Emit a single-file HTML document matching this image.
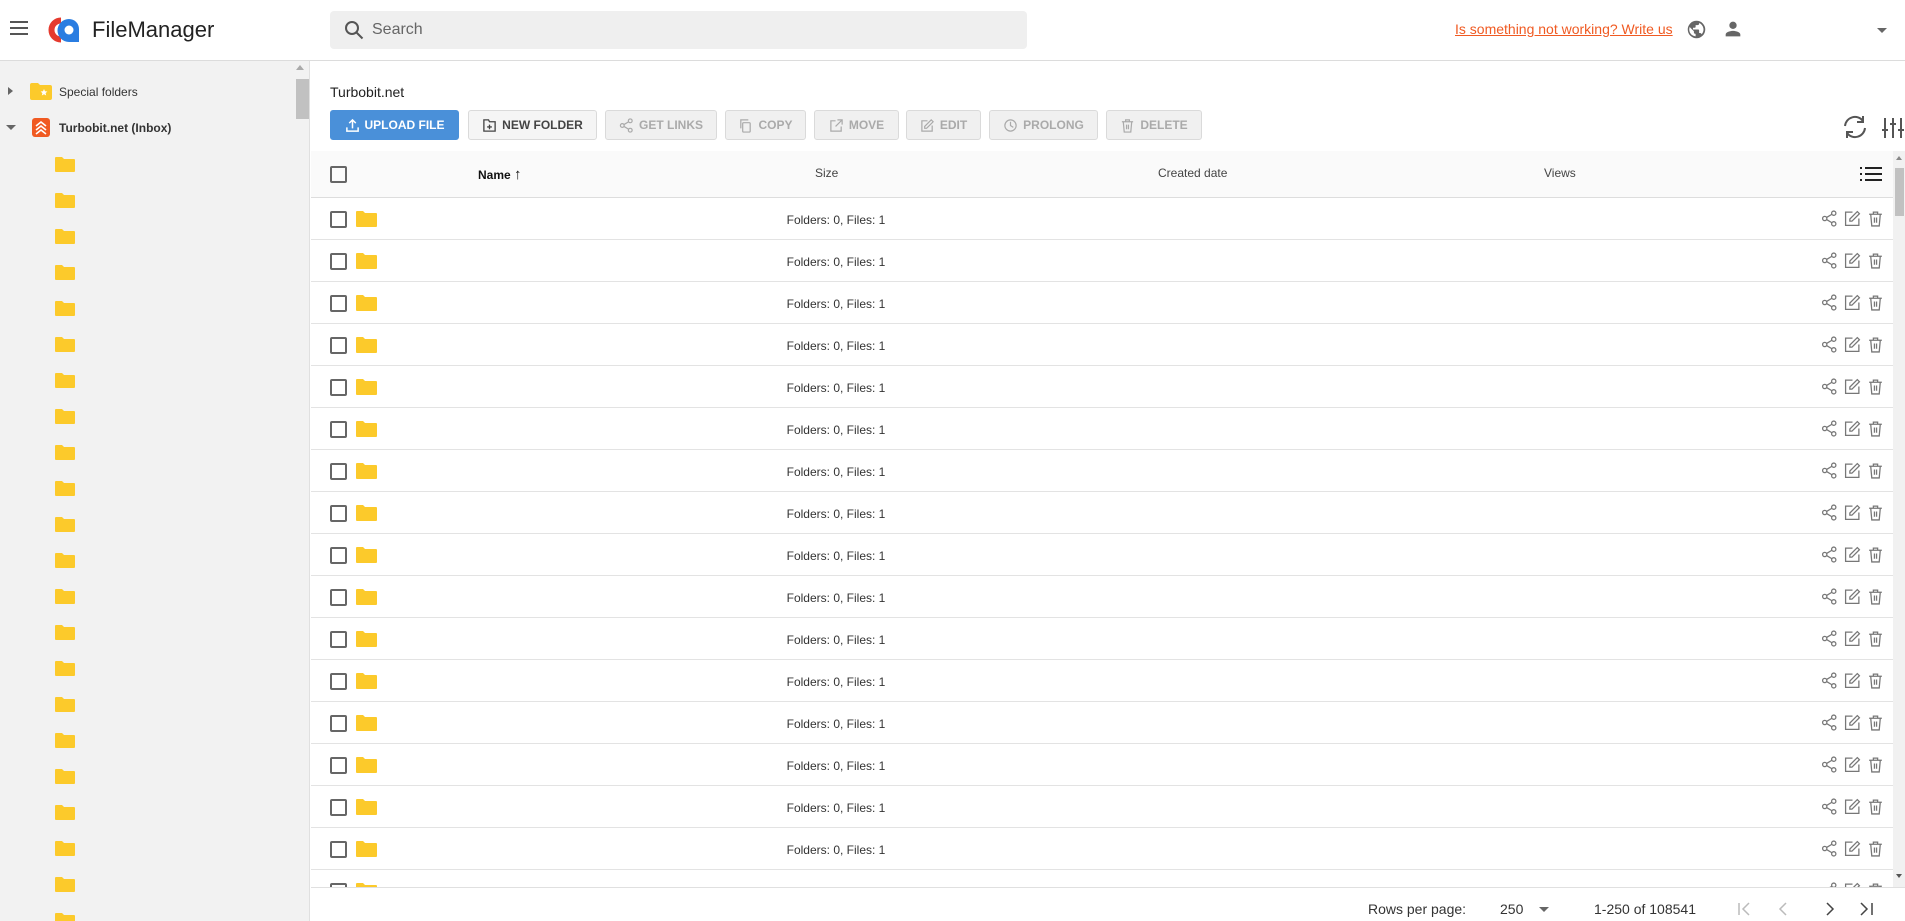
<!DOCTYPE html>
<html><head><meta charset="utf-8"><style>
*{box-sizing:border-box;margin:0;padding:0}
body{width:1905px;height:921px;overflow:hidden;font-family:"Liberation Sans",Arial,sans-serif;background:#fff;position:relative;color:#222}
.abs{position:absolute}
#hdr{left:0;top:0;width:1905px;height:61px;border-bottom:1px solid #dcdcdc;background:#fff}
#side{left:0;top:61px;width:310px;height:860px;background:#f2f2f2;border-right:1px solid #e0e0e0;overflow:hidden}
.fold{position:absolute;left:55px;width:20px;height:15px}
.btn{position:absolute;top:110px;height:30px;border:1px solid #dadada;border-radius:3px;background:#f0f0f0;color:#aaa;font-size:12px;font-weight:600;display:flex;align-items:center;justify-content:center;gap:5px}
.btn svg{width:15px;height:15px}
.row{position:absolute;left:311px;width:1582px;height:42px;border-bottom:1px solid #e3e3e3}
.cb{position:absolute;left:19px;top:13px;width:17px;height:17px;border:2px solid #666;border-radius:2px}
.rf{position:absolute;left:45px;top:13px;width:21px;height:16px}
.rt{position:absolute;left:475px;top:15px;font-size:12px;color:#333;width:100px;text-align:center}
.ic{position:absolute;top:12px;width:17px;height:17px}
.th{position:absolute;top:166px;font-size:12px;color:#444}
</style></head><body>
<div id="hdr" class="abs">
 <div class="abs" style="left:10px;top:21px;width:18px;height:2px;background:#555;box-shadow:0 6px 0 #555,0 12px 0 #555"></div>
 <svg class="abs" style="left:47px;top:16px" width="36" height="28" viewBox="0 0 36 28"><path d="M14 4.5a9.5 9.5 0 1 0 0 19" fill="none" stroke="#e53a2e" stroke-width="6"/><path d="M22 3a10 10 0 0 1 10 10v13H22a10 10 0 0 1 0-23z" fill="#2a7de1"/><circle cx="22" cy="14" r="4.5" fill="#fff"/></svg>
 <div class="abs" style="left:92px;top:17px;font-size:22px;color:#222">FileManager</div>
 <div class="abs" style="left:330px;top:11px;width:697px;height:38px;background:#efefef;border-radius:4px">
  <svg class="abs" style="left:14px;top:9px" width="20" height="20" viewBox="0 0 20 20"><circle cx="8" cy="8" r="6" fill="none" stroke="#555" stroke-width="2"/><path d="M12.5 12.5l6 6" stroke="#555" stroke-width="2"/></svg>
  <div class="abs" style="left:42px;top:10px;font-size:16px;color:#666">Search</div>
 </div>
 <div class="abs" style="left:1455px;top:21px;font-size:14px;color:#f05a22;text-decoration:underline">Is something not working? Write us</div>
 <svg class="abs" style="left:1686px;top:19px" width="21" height="21" viewBox="0 0 24 24"><path fill="#666" d="M12 2a10 10 0 1 0 0 20 10 10 0 0 0 0-20zm-1 17.9A8 8 0 0 1 4.2 9.2L9 14v1a2 2 0 0 0 2 2zm6.9-2.5A2 2 0 0 0 16 16h-1v-3a1 1 0 0 0-1-1H8v-2h2a1 1 0 0 0 1-1V7h2a2 2 0 0 0 2-2v-.4a8 8 0 0 1 2.9 12.8z"/></svg>
 <svg class="abs" style="left:1722px;top:18px" width="22" height="22" viewBox="0 0 24 24"><path fill="#666" d="M12 12a4 4 0 1 0 0-8 4 4 0 0 0 0 8zm0 2c-2.7 0-8 1.3-8 4v2h16v-2c0-2.7-5.3-4-8-4z"/></svg>
 <div class="abs" style="left:1877px;top:28px;border:5px solid transparent;border-top:5px solid #666"></div>
</div>
<div id="side" class="abs">
 <div class="abs" style="left:296px;top:4px;border:4px solid transparent;border-bottom:5px solid #aaa;border-top:0"></div>
 <div class="abs" style="left:296px;top:18px;width:13px;height:40px;background:#c1c1c1"></div>
 <div class="abs" style="left:8px;top:26px;border:4px solid transparent;border-left:5px solid #666"></div>
 <svg class="abs" style="left:30px;top:22px" width="22" height="17" viewBox="0 0 22 17"><path d="M0 2a2 2 0 0 1 2-2h6l2 2h10a2 2 0 0 1 2 2v11a2 2 0 0 1-2 2H2a2 2 0 0 1-2-2z" fill="#fcca2b"/><path d="M14 6l1 2.3 2.4.2-1.8 1.6.6 2.4-2.2-1.3-2.2 1.3.6-2.4-1.8-1.6 2.4-.2z" fill="#fff"/></svg>
 <div class="abs" style="left:59px;top:24px;font-size:12px;color:#333">Special folders</div>
 <div class="abs" style="left:6px;top:64px;border:5px solid transparent;border-top:5px solid #666"></div>
 <svg class="abs" style="left:32px;top:57px" width="18" height="19" viewBox="0 0 18 19"><rect width="18" height="19" rx="3" fill="#f05a22"/><path d="M4 8l5-4 5 4M4 12l5-4 5 4M4 16l5-4 5 4" fill="none" stroke="#fff" stroke-width="1.6"/></svg>
 <div class="abs" style="left:59px;top:60px;font-size:12px;font-weight:bold;color:#333">Turbobit.net (Inbox)</div>
 <svg class="fold" style="top:96px" viewBox="0 0 20 15"><path d="M0 1a1 1 0 0 1 1-1h6l2 2h10a1 1 0 0 1 1 1v11a1 1 0 0 1-1 1H1a1 1 0 0 1-1-1z" fill="#fcca2b"/></svg>
 <svg class="fold" style="top:132px" viewBox="0 0 20 15"><path d="M0 1a1 1 0 0 1 1-1h6l2 2h10a1 1 0 0 1 1 1v11a1 1 0 0 1-1 1H1a1 1 0 0 1-1-1z" fill="#fcca2b"/></svg>
 <svg class="fold" style="top:168px" viewBox="0 0 20 15"><path d="M0 1a1 1 0 0 1 1-1h6l2 2h10a1 1 0 0 1 1 1v11a1 1 0 0 1-1 1H1a1 1 0 0 1-1-1z" fill="#fcca2b"/></svg>
 <svg class="fold" style="top:204px" viewBox="0 0 20 15"><path d="M0 1a1 1 0 0 1 1-1h6l2 2h10a1 1 0 0 1 1 1v11a1 1 0 0 1-1 1H1a1 1 0 0 1-1-1z" fill="#fcca2b"/></svg>
 <svg class="fold" style="top:240px" viewBox="0 0 20 15"><path d="M0 1a1 1 0 0 1 1-1h6l2 2h10a1 1 0 0 1 1 1v11a1 1 0 0 1-1 1H1a1 1 0 0 1-1-1z" fill="#fcca2b"/></svg>
 <svg class="fold" style="top:276px" viewBox="0 0 20 15"><path d="M0 1a1 1 0 0 1 1-1h6l2 2h10a1 1 0 0 1 1 1v11a1 1 0 0 1-1 1H1a1 1 0 0 1-1-1z" fill="#fcca2b"/></svg>
 <svg class="fold" style="top:312px" viewBox="0 0 20 15"><path d="M0 1a1 1 0 0 1 1-1h6l2 2h10a1 1 0 0 1 1 1v11a1 1 0 0 1-1 1H1a1 1 0 0 1-1-1z" fill="#fcca2b"/></svg>
 <svg class="fold" style="top:348px" viewBox="0 0 20 15"><path d="M0 1a1 1 0 0 1 1-1h6l2 2h10a1 1 0 0 1 1 1v11a1 1 0 0 1-1 1H1a1 1 0 0 1-1-1z" fill="#fcca2b"/></svg>
 <svg class="fold" style="top:384px" viewBox="0 0 20 15"><path d="M0 1a1 1 0 0 1 1-1h6l2 2h10a1 1 0 0 1 1 1v11a1 1 0 0 1-1 1H1a1 1 0 0 1-1-1z" fill="#fcca2b"/></svg>
 <svg class="fold" style="top:420px" viewBox="0 0 20 15"><path d="M0 1a1 1 0 0 1 1-1h6l2 2h10a1 1 0 0 1 1 1v11a1 1 0 0 1-1 1H1a1 1 0 0 1-1-1z" fill="#fcca2b"/></svg>
 <svg class="fold" style="top:456px" viewBox="0 0 20 15"><path d="M0 1a1 1 0 0 1 1-1h6l2 2h10a1 1 0 0 1 1 1v11a1 1 0 0 1-1 1H1a1 1 0 0 1-1-1z" fill="#fcca2b"/></svg>
 <svg class="fold" style="top:492px" viewBox="0 0 20 15"><path d="M0 1a1 1 0 0 1 1-1h6l2 2h10a1 1 0 0 1 1 1v11a1 1 0 0 1-1 1H1a1 1 0 0 1-1-1z" fill="#fcca2b"/></svg>
 <svg class="fold" style="top:528px" viewBox="0 0 20 15"><path d="M0 1a1 1 0 0 1 1-1h6l2 2h10a1 1 0 0 1 1 1v11a1 1 0 0 1-1 1H1a1 1 0 0 1-1-1z" fill="#fcca2b"/></svg>
 <svg class="fold" style="top:564px" viewBox="0 0 20 15"><path d="M0 1a1 1 0 0 1 1-1h6l2 2h10a1 1 0 0 1 1 1v11a1 1 0 0 1-1 1H1a1 1 0 0 1-1-1z" fill="#fcca2b"/></svg>
 <svg class="fold" style="top:600px" viewBox="0 0 20 15"><path d="M0 1a1 1 0 0 1 1-1h6l2 2h10a1 1 0 0 1 1 1v11a1 1 0 0 1-1 1H1a1 1 0 0 1-1-1z" fill="#fcca2b"/></svg>
 <svg class="fold" style="top:636px" viewBox="0 0 20 15"><path d="M0 1a1 1 0 0 1 1-1h6l2 2h10a1 1 0 0 1 1 1v11a1 1 0 0 1-1 1H1a1 1 0 0 1-1-1z" fill="#fcca2b"/></svg>
 <svg class="fold" style="top:672px" viewBox="0 0 20 15"><path d="M0 1a1 1 0 0 1 1-1h6l2 2h10a1 1 0 0 1 1 1v11a1 1 0 0 1-1 1H1a1 1 0 0 1-1-1z" fill="#fcca2b"/></svg>
 <svg class="fold" style="top:708px" viewBox="0 0 20 15"><path d="M0 1a1 1 0 0 1 1-1h6l2 2h10a1 1 0 0 1 1 1v11a1 1 0 0 1-1 1H1a1 1 0 0 1-1-1z" fill="#fcca2b"/></svg>
 <svg class="fold" style="top:744px" viewBox="0 0 20 15"><path d="M0 1a1 1 0 0 1 1-1h6l2 2h10a1 1 0 0 1 1 1v11a1 1 0 0 1-1 1H1a1 1 0 0 1-1-1z" fill="#fcca2b"/></svg>
 <svg class="fold" style="top:780px" viewBox="0 0 20 15"><path d="M0 1a1 1 0 0 1 1-1h6l2 2h10a1 1 0 0 1 1 1v11a1 1 0 0 1-1 1H1a1 1 0 0 1-1-1z" fill="#fcca2b"/></svg>
 <svg class="fold" style="top:816px" viewBox="0 0 20 15"><path d="M0 1a1 1 0 0 1 1-1h6l2 2h10a1 1 0 0 1 1 1v11a1 1 0 0 1-1 1H1a1 1 0 0 1-1-1z" fill="#fcca2b"/></svg>
 <svg class="fold" style="top:852px" viewBox="0 0 20 15"><path d="M0 1a1 1 0 0 1 1-1h6l2 2h10a1 1 0 0 1 1 1v11a1 1 0 0 1-1 1H1a1 1 0 0 1-1-1z" fill="#fcca2b"/></svg>
</div>

<div class="abs" style="left:330px;top:84px;font-size:14px;color:#222">Turbobit.net</div>
<div class="btn" style="left:330px;width:129px;background:#4a90d9;border-color:#4a90d9;color:#fff"><svg viewBox="0 0 16 16"><path d="M8 11V2M4.5 5.5L8 2l3.5 3.5M2 10v4h12v-4" fill="none" stroke="#fff" stroke-width="1.6"/></svg>UPLOAD FILE</div>
<div class="btn" style="left:468px;width:129px;color:#444;background:#f5f5f5"><svg viewBox="0 0 16 16"><path d="M2 2h5l1 2h6v10H2z M8 7v5M5.5 9.5h5" fill="none" stroke="#444" stroke-width="1.4"/></svg>NEW FOLDER</div>
<div class="btn" style="left:605px;width:112px"><svg viewBox="0 0 16 16"><g fill="none" stroke="#aaa" stroke-width="1.3"><circle cx="3.5" cy="8" r="2"/><circle cx="12" cy="3" r="2"/><circle cx="12" cy="13" r="2"/><path d="M5.3 7l5-3M5.3 9l5 3"/></g></svg>GET LINKS</div>
<div class="btn" style="left:725px;width:81px"><svg viewBox="0 0 16 16"><g fill="none" stroke="#aaa" stroke-width="1.3"><rect x="5" y="5" width="8" height="10" rx="1"/><path d="M3 11V2h8"/></g></svg>COPY</div>
<div class="btn" style="left:814px;width:85px"><svg viewBox="0 0 16 16"><g fill="none" stroke="#aaa" stroke-width="1.3"><path d="M7 3H2v11h11V9M9 2h5v5M14 2L7 9"/></g></svg>MOVE</div>
<div class="btn" style="left:906px;width:75px"><svg viewBox="0 0 16 16"><g fill="none" stroke="#aaa" stroke-width="1.3"><path d="M8 3H2v11h11V8M12 2l2 2-7 7H5V9z"/></g></svg>EDIT</div>
<div class="btn" style="left:989px;width:109px"><svg viewBox="0 0 16 16"><g fill="none" stroke="#aaa" stroke-width="1.3"><circle cx="8" cy="8" r="6"/><path d="M8 4v4l3 2"/></g></svg>PROLONG</div>
<div class="btn" style="left:1106px;width:96px"><svg viewBox="0 0 16 16"><g fill="none" stroke="#aaa" stroke-width="1.3"><path d="M2 4h12M6 4V2h4v2M3.5 4l1 11h7l1-11M7 7v5M9 7v5"/></g></svg>DELETE</div>
<svg class="abs" style="left:1842px;top:115px" width="26" height="24" viewBox="0 0 26 24"><g fill="none" stroke="#555" stroke-width="2"><path d="M3 11a10 10 0 0 1 18-5M23 13a10 10 0 0 1-18 5"/><path d="M21 1v6h-6M5 23v-6h6"/></g></svg>
<svg class="abs" style="left:1881px;top:116px" width="24" height="24" viewBox="0 0 24 24"><g stroke="#555" stroke-width="2"><path d="M4 2v20M12 2v20M20 2v20M1 14h6M9 8h6M17 14h6"/></g></svg>

<div class="abs" style="left:311px;top:151px;width:1582px;height:47px;background:#fafafa;border-bottom:1px solid #ddd"></div>
<div class="abs" style="left:330px;top:166px;width:17px;height:17px;border:2px solid #666;border-radius:2px"></div>
<div class="th" style="left:478px;color:#111;font-weight:bold">Name <span style="font-weight:normal;font-size:15px">↑</span></div>
<div class="th" style="left:815px">Size</div>
<div class="th" style="left:1158px">Created date</div>
<div class="th" style="left:1544px">Views</div>
<svg class="abs" style="left:1860px;top:166px" width="22" height="16" viewBox="0 0 22 16"><g fill="#222"><rect x="0" y="1" width="2" height="2"/><rect x="0" y="7" width="2" height="2"/><rect x="0" y="13" width="2" height="2"/><rect x="5" y="1" width="17" height="2"/><rect x="5" y="7" width="17" height="2"/><rect x="5" y="13" width="17" height="2"/></g></svg>
<div class="abs" style="left:1893px;top:151px;width:12px;height:736px;background:#f1f1f1"></div>
<div class="abs" style="left:1895px;top:168px;width:9px;height:48px;background:#c1c1c1"></div>
<div class="abs" style="left:1896px;top:156px;border:3px solid transparent;border-bottom:4px solid #888;border-top:0"></div>
<div class="abs" style="left:1896px;top:874px;border:3px solid transparent;border-top:4px solid #555;border-bottom:0"></div>

<div id="rows" class="abs" style="left:0;top:0;width:1893px;height:887px;overflow:hidden">
<script>
var h='';for(var i=0;i<18;i++){var t=198+i*42;h+='<div class="row" style="top:'+t+'px"><div class="cb"></div><svg class="rf" viewBox="0 0 21 16"><path d="M0 1a1 1 0 0 1 1-1h6l2 2h11a1 1 0 0 1 1 1v12a1 1 0 0 1-1 1H1a1 1 0 0 1-1-1z" fill="#fcca2b"/></svg><div class="rt">Folders: 0, Files: 1</div>'+
'<svg class="ic" style="left:1510px" viewBox="0 0 16 16"><g fill="none" stroke="#777" stroke-width="1.2"><circle cx="3.5" cy="8" r="2"/><circle cx="12" cy="3" r="2"/><circle cx="12" cy="13" r="2"/><path d="M5.3 7l5-3M5.3 9l5 3"/></g></svg>'+
'<svg class="ic" style="left:1533px" viewBox="0 0 16 16"><g fill="none" stroke="#777" stroke-width="1.2"><path d="M8 2H1.5v12.5H14V8M12.5 1.5l2 2-7 7H5.5v-2z"/></g></svg>'+
'<svg class="ic" style="left:1556px" viewBox="0 0 16 16"><g fill="none" stroke="#777" stroke-width="1.2"><path d="M2 4h12M6 4V2h4v2M3.5 4l1 11h7l1-11M7 7v5M9 7v5"/></g></svg></div>';}
document.write(h);
</script>
</div>
<div class="abs" style="left:311px;top:887px;width:1594px;height:34px;background:#fff;border-top:1px solid #e0e0e0"></div>
<div class="abs" style="left:1368px;top:901px;font-size:14px;color:#333">Rows per page:</div>
<div class="abs" style="left:1500px;top:901px;font-size:14px;color:#333">250</div>
<div class="abs" style="left:1539px;top:907px;border:5px solid transparent;border-top:5px solid #666"></div>
<div class="abs" style="left:1594px;top:901px;font-size:14px;color:#333">1-250 of 108541</div>
<svg class="abs" style="left:1738px;top:901px" width="140" height="16" viewBox="0 0 140 16"><g fill="none" stroke-width="1.5"><path d="M1 2v12M11 2L5 8l6 6" stroke="#bbb"/><path d="M48 2l-6 6 6 6" stroke="#bbb"/><path d="M89 2l6 6-6 6" stroke="#444"/><path d="M123 2l6 6-6 6M134 2v12" stroke="#444"/></g></svg>
</body></html>
